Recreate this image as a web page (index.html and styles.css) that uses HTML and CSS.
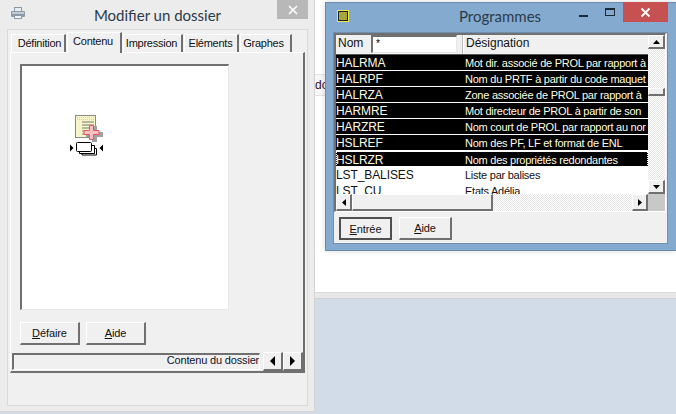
FILE: index.html
```html
<!DOCTYPE html>
<html lang="fr">
<head>
<meta charset="utf-8">
<title>Modifier un dossier</title>
<link rel="stylesheet" href="styles.css">
</head>
<body>
<div class="desktop">
  <div class="back-main"><div class="back-strip"><span>do</span></div></div>
  <div class="back-band"></div>
  <div class="back-blue"></div>

  <section class="win win-left">
    <header class="lt-title">
      <svg class="printer" width="16" height="13" viewBox="0 0 16 13"><rect x="4.500" y="0.500" width="7" height="4" fill="#e8eef4" stroke="#8b98a6"/><rect x="1" y="4" width="14" height="6" rx="1" fill="#8d9aa8"/><rect x="2" y="5" width="12" height="2" fill="#c3ccd5"/><rect x="4.500" y="8.500" width="7" height="3" fill="#f2f5f8" stroke="#8b98a6"/></svg>
      <h1 class="lt-name">Modifier un dossier</h1>
      <div class="lt-close"><svg width="10" height="10" viewBox="0 0 10 10"><path d="M1 1L9 9M9 1L1 9" stroke="#fff" stroke-width="1.600"/></svg></div>
    </header>
    <div class="lt-frame">
      <nav class="tabs">
        <div class="tab tab-1">Définition</div>
        <div class="tab tab-on">Contenu</div>
        <div class="tab tab-3">Impression</div>
        <div class="tab tab-4">Eléments</div>
        <div class="tab tab-5">Graphes</div>
      </nav>
      <div class="panel">
        <div class="preview">
          <svg class="doc-icon" width="34" height="42" viewBox="0 0 34 42">
            <rect x="5.500" y="0.500" width="20" height="22" fill="#f8f6c8" stroke="#8a8a8a"/>
            <path d="M7 2.500h17M7 4.500h17" stroke="#e6d85a" stroke-dasharray="1 1"/>
            <path d="M12 7h12M12 10h12M12 13h10M12 16h6M12 19h4" stroke="#777" stroke-width="1.200"/>
            <rect x="16" y="17" width="17" height="5" fill="#a0a0a0"/>
            <rect x="22" y="11" width="5" height="16" fill="#a0a0a0"/>
            <path d="M19.500 10.500h4v5h5.500v4h-5.500v5h-4v-5h-5.500v-4h5.500z" fill="#f9c0c0" stroke="#dc5a64"/>
            <path d="M0 29.500l3.500 3.500-3.500 3.500zM33 29.500l-3.500 3.500 3.500 3.500z" fill="#000"/>
            <rect x="6.500" y="27.500" width="15" height="9" rx="1" fill="#fff" stroke="#000"/>
            <path d="M22 30.500h2.500v8h-15v-2M24.500 33.500h2v6.500h-14.500v-1.500" fill="none" stroke="#000"/>
          </svg>
        </div>
        <div class="btn-row">
          <button class="btn btn-l"><u>D</u>éfaire</button>
          <button class="btn btn-l"><u>A</u>ide</button>
        </div>
        <div class="status">
          <div class="status-text">Contenu du dossier</div>
          <div class="arrow"><svg width="6" height="10" viewBox="0 0 6 10"><path d="M5 0v10L0 5z"/></svg></div>
          <div class="arrow"><svg width="6" height="10" viewBox="0 0 6 10"><path d="M0 0v10l5-5z"/></svg></div>
        </div>
      </div>
    </div>
  </section>

  <section class="win win-right">
    <header class="rt-title">
      <div class="rt-icon"></div>
      <h2 class="rt-name">Programmes</h2>
      <div class="rt-min"></div>
      <div class="rt-max"></div>
      <div class="rt-close"><svg width="11" height="11" viewBox="0 0 11 11"><path d="M1.500 1.500L9.500 9.500M9.500 1.500L1.500 9.500" stroke="#fff" stroke-width="1.800"/></svg></div>
    </header>
    <div class="rt-client">
      <div class="list-frame">
        <div class="list-main">
          <div class="list-head">
            <span class="h-nom">Nom</span>
            <div class="h-input">*</div>
            <div class="h-sep"></div>
            <span class="h-des">Désignation</span>
          </div>
          <div class="rows">
            <div class="row row-sel"><span class="c1">HALRMA</span><span class="c2">Mot dir. associé de PROL par rapport à</span></div>
            <div class="row row-sel"><span class="c1">HALRPF</span><span class="c2">Nom du PRTF à partir du code maquet</span></div>
            <div class="row row-sel"><span class="c1">HALRZA</span><span class="c2">Zone associée de PROL par rapport à</span></div>
            <div class="row row-sel"><span class="c1">HARMRE</span><span class="c2">Mot directeur de PROL à partir de son</span></div>
            <div class="row row-sel"><span class="c1">HARZRE</span><span class="c2">Nom court de PROL par rapport au nor</span></div>
            <div class="row row-sel"><span class="c1">HSLREF</span><span class="c2">Nom des PF, LF et format de ENL</span></div>
            <div class="row row-sel row-focus"><span class="c1">HSLRZR</span><span class="c2">Nom des propriétés redondantes</span></div>
            <div class="row"><span class="c1">LST_BALISES</span><span class="c2">Liste par balises</span></div>
            <div class="row"><span class="c1">LST_CU</span><span class="c2">Etats Adélia</span></div>
          </div>
          <div class="hbar">
            <div class="sb-btn sb-h"><svg width="4" height="7" viewBox="0 0 4 7"><path d="M4 0v7L0 3.500z"/></svg></div>
            <div class="h-thumb"></div>
            <div class="sb-track"></div>
            <div class="sb-btn sb-h"><svg width="4" height="7" viewBox="0 0 4 7"><path d="M0 0v7l4-3.500z"/></svg></div>
          </div>
        </div>
        <div class="vbar">
          <div class="sb-btn sb-v"><svg width="7" height="4" viewBox="0 0 7 4"><path d="M0 4h7L3.500 0z"/></svg></div>
          <div class="v-track v-track-a"></div>
          <div class="v-thumb"></div>
          <div class="v-track"></div>
          <div class="sb-btn sb-v"><svg width="7" height="4" viewBox="0 0 7 4"><path d="M0 0h7L3.500 4z"/></svg></div>
          <div class="v-corner"></div>
        </div>
      </div>
      <div class="rt-buttons">
        <button class="btn btn-r btn-def"><u>E</u>ntrée</button>
        <button class="btn btn-r"><u>A</u>ide</button>
      </div>
    </div>
  </section>
</div>
</body>
</html>
```
FILE: styles.css
```css
* { box-sizing: border-box; }
html, body { margin: 0; padding: 0; }
body { width: 676px; height: 414px; overflow: hidden; background: #fff; font-family: "Liberation Sans", Arial, sans-serif; font-size: 11px; letter-spacing: -0.25px; color: #000; }
.desktop { position: relative; width: 676px; height: 414px; display: flex; flex-direction: column; overflow: hidden; }
.back-main { height: 292px; background: #fff; padding-top: 74px; }
.back-strip { height: 22px; background: #f7f7f7; border-top: 1px solid #e4e4e4; border-bottom: 1px solid #e4e4e4; padding-left: 315px; line-height: 20px; font-size: 12px; letter-spacing: 0; color: #301030; }
.back-band { height: 7px; background: #e8e8e8; border-top: 1px solid #d8d8d8; border-bottom: 1px solid #d0d0d0; }
.back-blue { flex: 1; background: #d2dbe8; }

.win { position: absolute; }
.win-left { left: 0; top: 0; width: 315px; height: 412px; background: #ececec; border-right: 1px solid #d4d4d4; border-bottom: 1px solid #d4d4d4; }
.lt-title { height: 29px; position: relative; display: flex; align-items: center; justify-content: center; }
.printer { position: absolute; left: 10px; top: 7px; }
.lt-name { margin: 0 0 0 1px; font: 400 15px Lato, "Noto Sans", sans-serif; letter-spacing: 0; color: #2b3a4a; }
.lt-close { position: absolute; left: 277px; top: 0; width: 31px; height: 19px; background: #b8b8b8; display: flex; align-items: center; justify-content: center; }
.lt-frame { margin-left: 7px; width: 301px; height: 377px; background: #f0f0f0; border: 1px solid #d9d9d9; padding: 2px 2px 0 2px; }
.tabs { display: flex; align-items: flex-end; height: 20px; padding-left: 1px; position: relative; z-index: 1; }
.tab { height: 18px; width: 55px; margin-right: 1px; background: #f0f0f0; border-top: 1px solid #fff; border-left: 1px solid #fff; border-right: 2px solid #707070; text-align: center; line-height: 17px; color: #111; }
.tab-1 { padding-left: 3px; }
.tab-on { height: 21px; width: 55px; line-height: 17px; margin-bottom: -1px; padding-bottom: 3px; padding-right: 2px; }
.tab-3 { width: 60px; padding-right: 2px; }
.tab-4 { width: 55px; padding-right: 1px; }
.tab-5 { width: 52px; padding-right: 4px; }
.panel { width: 295px; height: 321px; border-top: 1px solid #fff; border-left: 1px solid #fff; border-right: 2px solid #707070; border-bottom: 2px solid #707070; padding: 11px 0 0 2px; display: flex; flex-direction: column; }
.preview { margin-left: 7px; width: 209px; height: 246px; background: #fff; border-top: 2px solid #707070; border-left: 2px solid #707070; border-right: 1px solid #e8e8e8; border-bottom: 1px solid #e8e8e8; padding: 49px 0 0 48px; }
.doc-icon { display: block; }
.btn-row { display: flex; gap: 6px; margin: 12px 0 0 7px; }
.btn { font: 11px "Liberation Sans", Arial, sans-serif; letter-spacing: -0.1px; color: #111; background: #f0f0f0; border: 0; border-top: 1px solid #fff; border-left: 1px solid #fff; border-right: 2px solid #707070; border-bottom: 2px solid #707070; padding: 0; }
.btn-l { width: 60px; height: 23px; }
.status { display: flex; margin: 7px 0 0 -1px; height: 19px; align-items: flex-start; }
.status-text { width: 249px; height: 17px; margin-top: 1px; border-top: 2px solid #707070; border-left: 2px solid #707070; border-right: 1px solid #fff; border-bottom: 1px solid #fff; text-align: right; line-height: 11px; letter-spacing: -0.17px; color: #101030; }
.arrow { width: 20px; height: 19px; background: #f0f0f0; border-top: 1px solid #fff; border-left: 1px solid #fff; border-right: 2px solid #707070; border-bottom: 2px solid #707070; display: flex; align-items: center; justify-content: center; }
.status-text + .arrow { margin-left: 3px; }

.win-right { left: 325px; top: 2px; width: 351px; height: 249px; background: #84aacf; border: 1px solid #6a8aaa; border-right: 0; box-shadow: 0 0 6px rgba(0,0,0,.15); }
.rt-title { height: 29px; position: relative; display: flex; align-items: center; justify-content: center; }
.rt-icon { position: absolute; left: 12px; top: 8px; width: 10px; height: 10px; background: #a8a838; border: 1px solid #222; outline: 1px solid #e8e860; }
.rt-name { margin: -3px 0 0 -2px; font: 400 15px Lato, "Noto Sans", sans-serif; letter-spacing: 0; color: #2b3a4a; }
.rt-min { position: absolute; left: 253px; top: 12px; width: 9px; height: 2px; background: #1a2a3a; }
.rt-max { position: absolute; left: 279px; top: 5px; width: 10px; height: 8px; border: 1px solid #1a2a3a; border-top-width: 2px; }
.rt-close { position: absolute; left: 297px; top: -1px; width: 45px; height: 20px; background: #c75050; display: flex; align-items: center; justify-content: center; }
.rt-client { margin-left: 7px; width: 335px; height: 212px; background: #f0f0f0; border: 1px solid #6f90ae; }
.list-frame { display: flex; width: 332px; height: 179px; border-top: 2px solid #707070; border-left: 2px solid #707070; border-right: 1px solid #fff; border-bottom: 1px solid #fff; }
.list-main { width: 312px; flex: none; display: flex; flex-direction: column; }
.list-head { height: 20px; flex: none; display: flex; align-items: flex-start; border-bottom: 1px solid #555; background: #f0f0f0; font-size: 12px; letter-spacing: 0; line-height: 17px; }
.h-nom { width: 35px; padding-left: 2px; color: #111; }
.h-input { width: 86px; height: 18px; background: #fff; border-top: 2px solid #707070; border-left: 2px solid #707070; border-right: 1px solid #e8e8e8; border-bottom: 1px solid #e8e8e8; padding-left: 3px; line-height: 13px; font-size: 10px; }
.h-sep { width: 2px; height: 19px; margin-left: 5px; background: linear-gradient(to right, #bbb 50%, #fff 50%); }
.h-des { padding-left: 2px; color: #111; }
.rows { height: 139px; overflow: hidden; background: #fff; flex: none; }
.row { height: 16px; flex: none; display: flex; white-space: nowrap; overflow: hidden; line-height: 17px; border-bottom: 1px solid #fff; color: #111; }
.row-sel { background: #000; color: #ffffe6; }
.row-focus { outline: 1px dotted #fff; outline-offset: -1px; border-top: 1px solid #fff; line-height: 16px; }
.c1 { width: 129px; flex: none; font-size: 12px; letter-spacing: -0.1px; }
.c2 { flex: none; }
.hbar { height: 17px; flex: none; display: flex; background: repeating-conic-gradient(#fff 0 25%, #e4e4e4 0 50%) 0 0/2px 2px; }
.sb-btn { flex: none; background: #f0f0f0; border-top: 1px solid #fff; border-left: 1px solid #fff; border-right: 2px solid #707070; border-bottom: 2px solid #707070; display: flex; align-items: center; justify-content: center; }
.sb-h { width: 16px; height: 17px; }
.sb-v { width: 17px; height: 14px; }
.h-thumb { width: 141px; background: #f0f0f0; border-top: 1px solid #fff; border-left: 1px solid #fff; border-right: 2px solid #707070; border-bottom: 2px solid #707070; }
.sb-track { flex: 1; }
.vbar { width: 17px; flex: none; display: flex; flex-direction: column; background: repeating-conic-gradient(#fff 0 25%, #e4e4e4 0 50%) 0 0/2px 2px; }
.v-track-a { height: 39px; flex: none !important; }
.v-track { flex: 1; }
.v-thumb { height: 8px; flex: none; background: #f0f0f0; border-top: 1px solid #fff; border-left: 1px solid #fff; border-right: 2px solid #707070; border-bottom: 2px solid #707070; }
.v-corner { height: 17px; flex: none; background: #c8c8c8; }
.rt-buttons { display: flex; gap: 7px; padding: 5px 0 0 5px; }
.btn-r { width: 53px; height: 23px; }
.btn-def { border: 2px solid #505050; }
```
